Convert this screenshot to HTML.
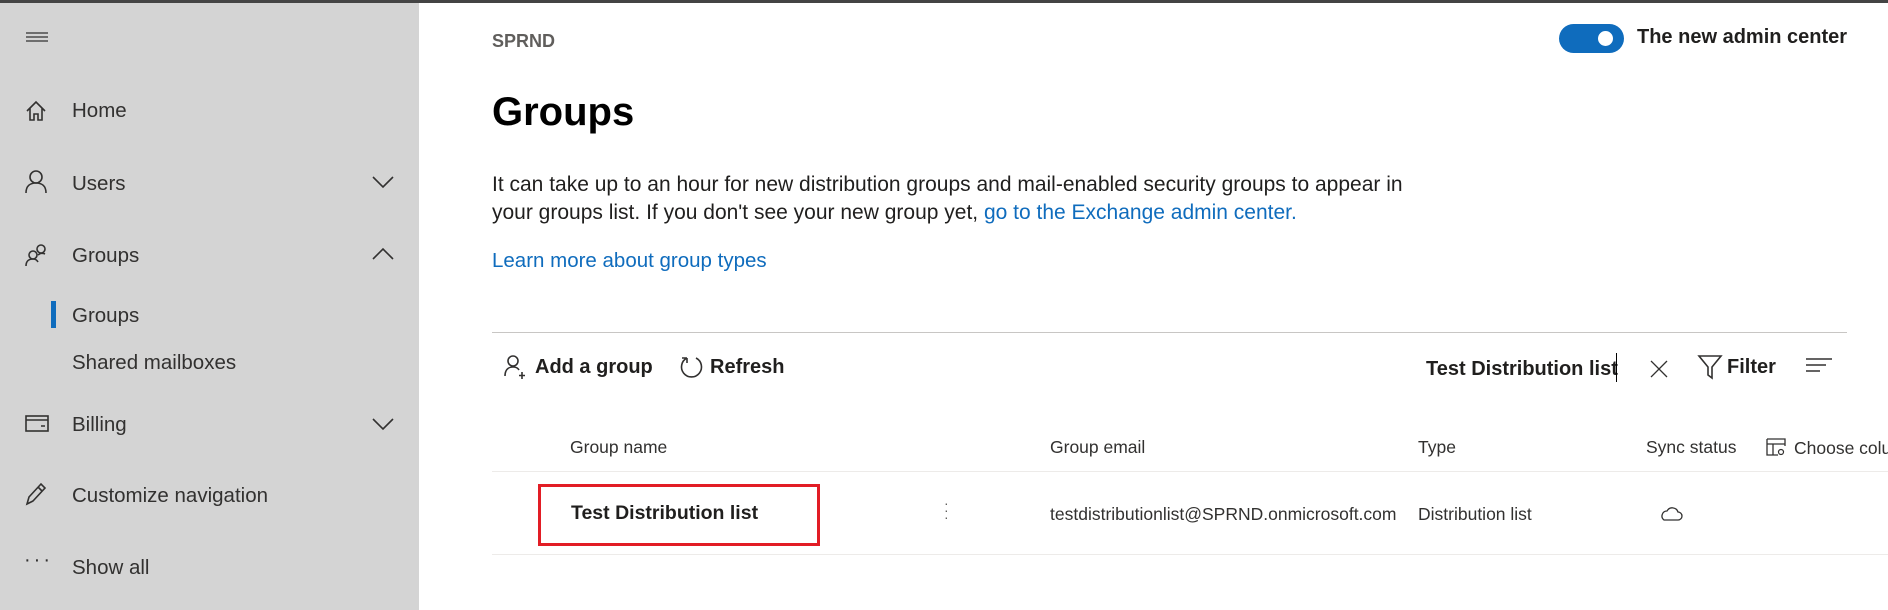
<!DOCTYPE html>
<html><head><meta charset="utf-8"><style>
*{margin:0;padding:0;box-sizing:border-box}
body{width:1888px;height:610px;overflow:hidden;background:#fff;font-family:"Liberation Sans",sans-serif;position:relative;color:#201f1e}
.top{position:absolute;left:0;top:0;width:1888px;height:3px;background:#444}
.side{position:absolute;left:0;top:3px;width:419px;height:607px;background:#d4d4d4}
.a{position:absolute;white-space:nowrap}
.nav{font-size:20.5px;color:#323130;left:72px}
svg{position:absolute;overflow:visible}
.ic{fill:none;stroke:#323130;stroke-width:1.6}
</style></head><body>
<div class="top"></div>
<div class="side"></div>
<svg class="ic" style="left:26px;top:32px" width="22" height="10"><path d="M0 1H22M0 5H22M0 9H22" stroke-width="1.3"/></svg>
<svg class="ic" style="left:25px;top:100px" width="22" height="22"><path d="M2 11L11 2L20 11M5 8V20H9V14H13V20H17V8"/></svg>
<div class="a nav" style="top:99px">Home</div>
<svg class="ic" style="left:25px;top:170px" width="22" height="24"><circle cx="11" cy="7" r="6"/><path d="M1 23C1 16 5 13 11 13C17 13 21 16 21 23"/></svg>
<div class="a nav" style="top:172px">Users</div>
<svg class="ic" style="left:372px;top:176px" width="22" height="12"><path d="M1 1L11 11L21 1"/></svg>
<svg class="ic" style="left:25px;top:243px" width="24" height="24"><circle cx="8" cy="12" r="4"/><circle cx="16" cy="6" r="4"/><path d="M1 23C1 18 4 16 8 16C10 16 12 17 13 19M13 12C15 10 18 10 20 11"/></svg>
<div class="a nav" style="top:244px">Groups</div>
<svg class="ic" style="left:372px;top:248px" width="22" height="12"><path d="M1 11L11 1L21 11"/></svg>
<div class="a" style="left:51px;top:301px;width:5px;height:27px;background:#0f6cbd"></div>
<div class="a nav" style="top:304px">Groups</div>
<div class="a nav" style="top:351px">Shared mailboxes</div>
<svg class="ic" style="left:25px;top:415px" width="24" height="18"><rect x="1" y="1" width="22" height="15"/><path d="M1 5H23M16 11H20"/></svg>
<div class="a nav" style="top:413px">Billing</div>
<svg class="ic" style="left:372px;top:418px" width="22" height="12"><path d="M1 1L11 11L21 1"/></svg>
<svg class="ic" style="left:25px;top:482px" width="22" height="24"><path d="M2 22L4 15L16 2L20 6L8 19ZM2 22L8 19M13 5L17 9"/></svg>
<div class="a nav" style="top:484px">Customize navigation</div>
<div class="a" style="left:24px;top:549px;font-size:20px;letter-spacing:3px;color:#323130">···</div>
<div class="a nav" style="top:556px">Show all</div>

<div class="a" style="left:492px;top:31px;font-size:18px;color:#605e5c;font-weight:bold">SPRND</div>
<div class="a" style="left:492px;top:90px;font-size:40px;font-weight:bold;color:#000">Groups</div>
<div class="a" style="left:492px;top:171px;font-size:21px;line-height:28px;color:#201f1e">It can take up to an hour for new distribution groups and mail-enabled security groups to appear in<br>your groups list. If you don't see your new group yet, <span style="color:#0f6cbd">go to the Exchange admin center.</span></div>
<div class="a" style="left:492px;top:249px;font-size:20.5px;color:#0f6cbd">Learn more about group types</div>
<div class="a" style="left:492px;top:332px;width:1355px;height:1px;background:#c8c6c4"></div>

<div class="a" style="left:1559px;top:24px;width:65px;height:29px;border-radius:15px;background:#0f6cbd"></div>
<div class="a" style="left:1598px;top:31px;width:15px;height:15px;border-radius:50%;background:#fff"></div>
<div class="a" style="left:1637px;top:26px;font-size:20px;font-weight:bold;color:#201f1e">The new admin center</div>

<svg class="ic" style="left:503px;top:354px" width="26" height="26"><circle cx="10" cy="7" r="5"/><path d="M2 22C2 16 5 13 10 13C13 13 15 14 16 16M19 18V25M16 21.5H22"/></svg>
<div class="a" style="left:535px;top:356px;font-size:20px;font-weight:bold">Add a group</div>
<svg class="ic" style="left:680px;top:355px" width="24" height="24"><path d="M7 3A10 10 0 1 0 16 3M7 3V8M7 3H2"/></svg>
<div class="a" style="left:710px;top:356px;font-size:20px;font-weight:bold">Refresh</div>
<div class="a" style="left:1426px;top:358px;font-size:20px;font-weight:bold">Test Distribution list</div>
<div class="a" style="left:1616px;top:353px;width:1px;height:29px;background:#000"></div>
<svg class="ic" style="left:1650px;top:360px" width="18" height="18"><path d="M1 1L17 17M17 1L1 17" stroke-width="1.3"/></svg>
<svg class="ic" style="left:1698px;top:355px" width="24" height="24"><path d="M1 1H23L14 12V23L10 20V12Z"/></svg>
<div class="a" style="left:1727px;top:356px;font-size:20px;font-weight:bold">Filter</div>
<svg class="ic" style="left:1806px;top:358px" width="26" height="16"><path d="M0 1H26M0 7H20M0 13H14" stroke-width="1.5"/></svg>

<div class="a" style="left:570px;top:437px;font-size:17.5px;color:#323130">Group name</div>
<div class="a" style="left:1050px;top:437px;font-size:17.5px;color:#323130">Group email</div>
<div class="a" style="left:1418px;top:437px;font-size:17.5px;color:#323130">Type</div>
<div class="a" style="left:1646px;top:437px;font-size:17.5px;color:#323130">Sync status</div>
<svg class="ic" style="left:1766px;top:438px" width="20" height="18"><path d="M1 1H19V8M1 1V17H12M1 6H19M7 6V17" stroke-width="1.3"/><circle cx="15" cy="14" r="2.5" stroke-width="1.2"/></svg>
<div class="a" style="left:1794px;top:438px;font-size:17.5px;color:#323130">Choose columns</div>
<div class="a" style="left:492px;top:471px;width:1396px;height:1px;background:#edebe9"></div>

<div class="a" style="left:538px;top:484px;width:282px;height:62px;border:3px solid #e21d25"></div>
<div class="a" style="left:571px;top:502px;font-size:19.5px;font-weight:bold;color:#201f1e">Test Distribution list</div>
<div class="a" style="left:944px;top:500px;font-size:14px;line-height:7px;color:#605e5c">·<br>·<br>·</div>
<div class="a" style="left:1050px;top:504px;font-size:17.5px;color:#323130;width:352px;overflow:hidden">testdistributionlist@SPRND.onmicrosoft.com</div>
<div class="a" style="left:1418px;top:504px;font-size:17.5px;color:#323130">Distribution list</div>
<svg class="ic" style="left:1659px;top:506px" width="24" height="16"><path d="M5 14H19A4 4 0 0 0 19 6A6 6 0 0 0 8 5A5 5 0 0 0 5 14Z" stroke-width="1.3"/></svg>
<div class="a" style="left:492px;top:554px;width:1396px;height:1px;background:#edebe9"></div>
</body></html>
